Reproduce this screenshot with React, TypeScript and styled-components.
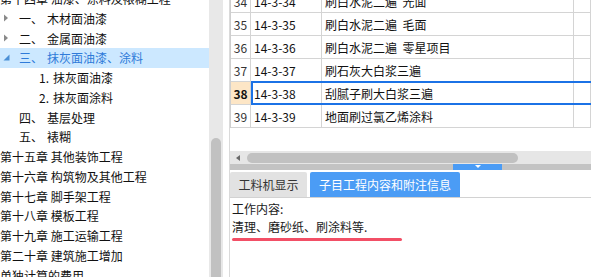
import React from "react";
import styled, { createGlobalStyle, css } from "styled-components";

const Global = createGlobalStyle`
  html, body { margin: 0; padding: 0; background: #fff; }
  body { font-family: "Noto Sans CJK SC", "Liberation Sans", sans-serif; font-size: 12px; color: #111; }
`;

const Root = styled.div`
  display: flex;
  width: 591px;
  height: 277px;
  overflow: hidden;
  background: #fff;
`;

const TreePane = styled.div`
  width: 209px;
  flex: none;
  overflow: hidden;
`;

const TreeList = styled.div`
  margin-top: -11.25px;
  display: flex;
  flex-direction: column;
`;

const TreeRow = styled.div<{ $level: number; $selected?: boolean }>`
  height: 19.75px;
  display: flex;
  align-items: center;
  white-space: nowrap;
  font-size: 12px;
  padding-left: ${(p) => (p.$level === 0 ? 0 : p.$level === 1 ? 3 : 39)}px;
  color: ${(p) => (p.$selected ? "#2f7bd9" : "#111")};
  background: ${(p) => (p.$selected ? "#cce8ff" : "transparent")};
`;

const Caret = styled.span<{ $open?: boolean }>`
  width: 16px;
  flex: none;
  display: flex;
  align-items: center;
`;

const NumLabel = styled.span`
  width: 28px;
  flex: none;
`;

const SubNum = styled.span`
  width: 14px;
  flex: none;
`;

const VScroll = styled.div`
  width: 14px;
  flex: none;
  background: #e8e8e8;
  display: flex;
  flex-direction: column;
  align-items: center;
`;

const VThumb = styled.div`
  margin-top: 138px;
  width: 10px;
  flex: 1;
  background: #c1c1c1;
  border-radius: 5px 5px 0 0;
`;

const Gap = styled.div`
  width: 6px;
  flex: none;
`;

const RightPane = styled.div`
  flex: 1;
  min-width: 0;
  border-left: 1px solid #dadada;
  display: flex;
  flex-direction: column;
`;

const TableArea = styled.div`
  height: 151px;
  flex: none;
  overflow: hidden;
`;

const Table = styled.div`
  margin-top: -10px;
  border-left: 1px solid #cfcfcf;
  display: flex;
  flex-direction: column;
`;

const Row = styled.div`
  display: grid;
  grid-template-columns: 20px 71px 252px 1fr;
  height: 23px;
  position: relative;
`;

const Cell = styled.div<{ $kind: "num" | "code" | "name" | "extra"; $active?: boolean }>`
  display: flex;
  align-items: center;
  border-bottom: 1px solid #d4d4d4;
  border-right: 1px solid #d4d4d4;
  white-space: nowrap;
  overflow: hidden;
  color: #111;
  font-size: 12px;
  ${(p) =>
    p.$kind === "num" &&
    css`
      justify-content: center;
      color: ${p.$active ? "#111" : "#333"};
      font-weight: ${p.$active ? 700 : 400};
      background: ${p.$active ? "#fde6c6" : "#fff"};
    `}
  ${(p) => (p.$kind === "code" || p.$kind === "name") && css`padding-left: 3px;`}
`;

const SelectFrame = styled.div`
  position: absolute;
  left: 20px;
  right: 0;
  top: -1px;
  bottom: 0;
  border: 2px solid #1b72e6;
  border-right: none;
  pointer-events: none;
`;

const HScroll = styled.div`
  height: 13px;
  flex: none;
  background: #e6e6e6;
  display: flex;
  align-items: center;
  padding-left: 6px;
  gap: 4px;
`;

const LeftArrow = styled.span`
  width: 0;
  height: 0;
  border-top: 3.5px solid transparent;
  border-bottom: 3.5px solid transparent;
  border-right: 4px solid #6a6a6a;
`;

const HThumb = styled.div`
  width: 271px;
  height: 10px;
  margin-left: 3px;
  background: #c1c1c1;
  border-radius: 5px;
`;

const Splitter = styled.div`
  height: 6px;
  flex: none;
  background: #c3c3c3;
  display: flex;
  padding-left: 223px;
`;

const SplitGrip = styled.div`
  width: 49px;
  background: #4b9cf5;
  display: flex;
  justify-content: center;
  padding-top: 1px;
`;

const GripArrow = styled.span`
  width: 0;
  height: 0;
  border-left: 3px solid transparent;
  border-right: 3px solid transparent;
  border-top: 3px solid #fff;
`;

const TabBar = styled.div`
  height: 27px;
  flex: none;
  display: flex;
  align-items: flex-end;
  gap: 3px;
  border-bottom: 1px solid #d2d2d2;
`;

const Tab = styled.div<{ $active?: boolean }>`
  height: 25px;
  display: flex;
  align-items: center;
  justify-content: center;
  font-size: 12px;
  border-radius: 2px 2px 0 0;
  width: ${(p) => (p.$active ? 150 : 77)}px;
  background: ${(p) => (p.$active ? "#4b9cf5" : "#e2e2e2")};
  color: ${(p) => (p.$active ? "#fff" : "#333")};
`;

const Content = styled.div`
  padding: 2px 0 0 2px;
  display: flex;
  flex-direction: column;
`;

const Line = styled.div`
  line-height: 18px;
  font-size: 12px;
  color: #1a1a1a;
  white-space: nowrap;
`;

const Underline = styled.div`
  margin-top: 2px;
  width: 170px;
  height: 3px;
  border-radius: 2px;
  background: #f24f66;
`;

const CollapsedIcon = () => (
  <svg width="6" height="8" viewBox="0 0 6 8">
    <path d="M1 0.5 L5 4 L1 7.5 Z" fill="#8a8a8a" />
  </svg>
);

const ExpandedIcon = () => (
  <svg width="7" height="7" viewBox="0 0 7 7">
    <path d="M6.5 0.5 L6.5 6.5 L0.5 6.5 Z" fill="#4a8fd6" />
  </svg>
);

type TreeItem =
  | { level: 0; text: string }
  | { level: 1; num: string; text: string; caret?: "open" | "closed"; selected?: boolean }
  | { level: 2; num: string; text: string };

const tree: TreeItem[] = [
  { level: 0, text: "第十四章 油漆、涂料及裱糊工程" },
  { level: 1, num: "一、", text: "木材面油漆", caret: "closed" },
  { level: 1, num: "二、", text: "金属面油漆", caret: "closed" },
  { level: 1, num: "三、", text: "抹灰面油漆、涂料", caret: "open", selected: true },
  { level: 2, num: "1.", text: "抹灰面油漆" },
  { level: 2, num: "2.", text: "抹灰面涂料" },
  { level: 1, num: "四、", text: "基层处理" },
  { level: 1, num: "五、", text: "裱糊" },
  { level: 0, text: "第十五章 其他装饰工程" },
  { level: 0, text: "第十六章 构筑物及其他工程" },
  { level: 0, text: "第十七章 脚手架工程" },
  { level: 0, text: "第十八章 模板工程" },
  { level: 0, text: "第十九章 施工运输工程" },
  { level: 0, text: "第二十章 建筑施工增加" },
  { level: 0, text: "单独计算的费用" },
];

const rows = [
  { n: 34, code: "14-3-34", name: "刷白水泥二遍\u00a0\u00a0光面" },
  { n: 35, code: "14-3-35", name: "刷白水泥二遍\u00a0\u00a0毛面" },
  { n: 36, code: "14-3-36", name: "刷白水泥二遍\u00a0\u00a0零星项目" },
  { n: 37, code: "14-3-37", name: "刷石灰大白浆三遍" },
  { n: 38, code: "14-3-38", name: "刮腻子刷大白浆三遍" },
  { n: 39, code: "14-3-39", name: "地面刷过氯乙烯涂料" },
];

export default function App() {
  return (
    <>
      <Global />
      <Root>
        <TreePane>
          <TreeList>
            {tree.map((t, i) => {
              if (t.level === 0) {
                return (
                  <TreeRow key={i} $level={0}>
                    {t.text}
                  </TreeRow>
                );
              }
              if (t.level === 1) {
                return (
                  <TreeRow key={i} $level={1} $selected={t.selected}>
                    <Caret>
                      {t.caret === "closed" && <CollapsedIcon />}
                      {t.caret === "open" && <ExpandedIcon />}
                    </Caret>
                    <NumLabel>{t.num}</NumLabel>
                    {t.text}
                  </TreeRow>
                );
              }
              return (
                <TreeRow key={i} $level={2}>
                  <SubNum>{t.num}</SubNum>
                  {t.text}
                </TreeRow>
              );
            })}
          </TreeList>
        </TreePane>
        <VScroll>
          <VThumb />
        </VScroll>
        <Gap />
        <RightPane>
          <TableArea>
            <Table>
              {rows.map((r) => {
                const active = r.n === 38;
                return (
                  <Row key={r.n}>
                    <Cell $kind="num" $active={active}>
                      {r.n}
                    </Cell>
                    <Cell $kind="code">{r.code}</Cell>
                    <Cell $kind="name">{r.name}</Cell>
                    <Cell $kind="extra" />
                    {active && <SelectFrame />}
                  </Row>
                );
              })}
            </Table>
          </TableArea>
          <HScroll>
            <LeftArrow />
            <HThumb />
          </HScroll>
          <Splitter>
            <SplitGrip>
              <GripArrow />
            </SplitGrip>
          </Splitter>
          <TabBar>
            <Tab>工料机显示</Tab>
            <Tab $active>子目工程内容和附注信息</Tab>
          </TabBar>
          <Content>
            <Line>工作内容:</Line>
            <Line>清理、磨砂纸、刷涂料等.</Line>
            <Underline />
          </Content>
        </RightPane>
      </Root>
    </>
  );
}
